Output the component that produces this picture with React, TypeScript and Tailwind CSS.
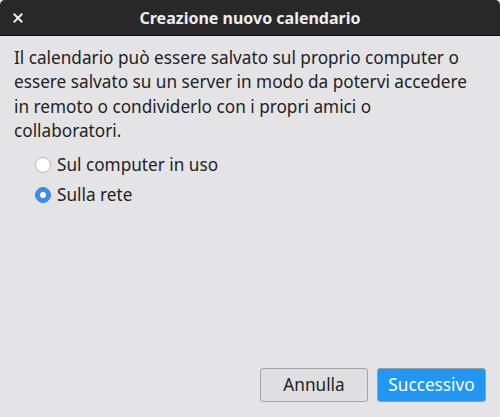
import React, { useState } from 'react';

const Radio: React.FC<{ checked: boolean; label: string; onClick: () => void }> = ({ checked, label, onClick }) => (
  <label className="flex items-center h-[30px] cursor-pointer" onClick={onClick}>
    <span
      className={`w-[16px] h-[16px] rounded-full flex items-center justify-center mr-[6px] ${
        checked ? 'bg-[#3d8ee8] border border-[#3a86dc]' : 'bg-white border border-[#b8b8b8]'
      }`}
    >
      {checked && <span className="w-[6px] h-[6px] rounded-full bg-white" />}
    </span>
    <span>{label}</span>
  </label>
);

export default function App() {
  const [where, setWhere] = useState<'local' | 'network'>('network');

  return (
    <div
      className="w-[500px] h-[417px] flex flex-col bg-[#e4e4e6] text-[#222] overflow-hidden"
      style={{ fontFamily: '"Noto Sans", "Open Sans", sans-serif' }}
    >
      {/* Title bar */}
      <div className="h-[36px] shrink-0 flex items-center relative bg-[#282828] rounded-t-[5px] border-b border-[#0e0e0e]">
        <button className="w-[36px] h-full flex items-center justify-center text-white">
          <svg width="10" height="10" viewBox="0 0 10 10">
            <path d="M1.5 1.5 L8.5 8.5 M8.5 1.5 L1.5 8.5" stroke="#f0f0f0" strokeWidth="2" strokeLinecap="square" />
          </svg>
        </button>
        <div className="absolute inset-0 flex items-center justify-center pointer-events-none text-[16px] font-bold text-[#eeeeee]">
          Creazione nuovo calendario
        </div>
      </div>

      {/* Body */}
      <div className="flex-1 flex flex-col px-[14px] pt-[10px] text-[17.2px] leading-[24.3px]">
        <p>
          Il calendario può essere salvato sul proprio computer o<br />
          essere salvato su un server in modo da potervi accedere<br />
          in remoto o condividerlo con i propri amici o<br />
          collaboratori.
        </p>
        <div className="flex flex-col pl-[21px] mt-[7px]">
          <Radio checked={where === 'local'} label="Sul computer in uso" onClick={() => setWhere('local')} />
          <Radio checked={where === 'network'} label="Sulla rete" onClick={() => setWhere('network')} />
        </div>
      </div>

      {/* Buttons */}
      <div className="flex justify-end gap-[9px] px-[14px] pb-[15px] text-[17.2px]">
        <button className="w-[108px] h-[34px] rounded-[3px] border border-[#a3a3a6] bg-[#dfdfe2] text-[#222]">
          Annulla
        </button>
        <button className="w-[109px] h-[34px] rounded-[3px] border border-[#9a9ea4] bg-[#2196f3] text-white">
          Successivo
        </button>
      </div>
    </div>
  );
}
